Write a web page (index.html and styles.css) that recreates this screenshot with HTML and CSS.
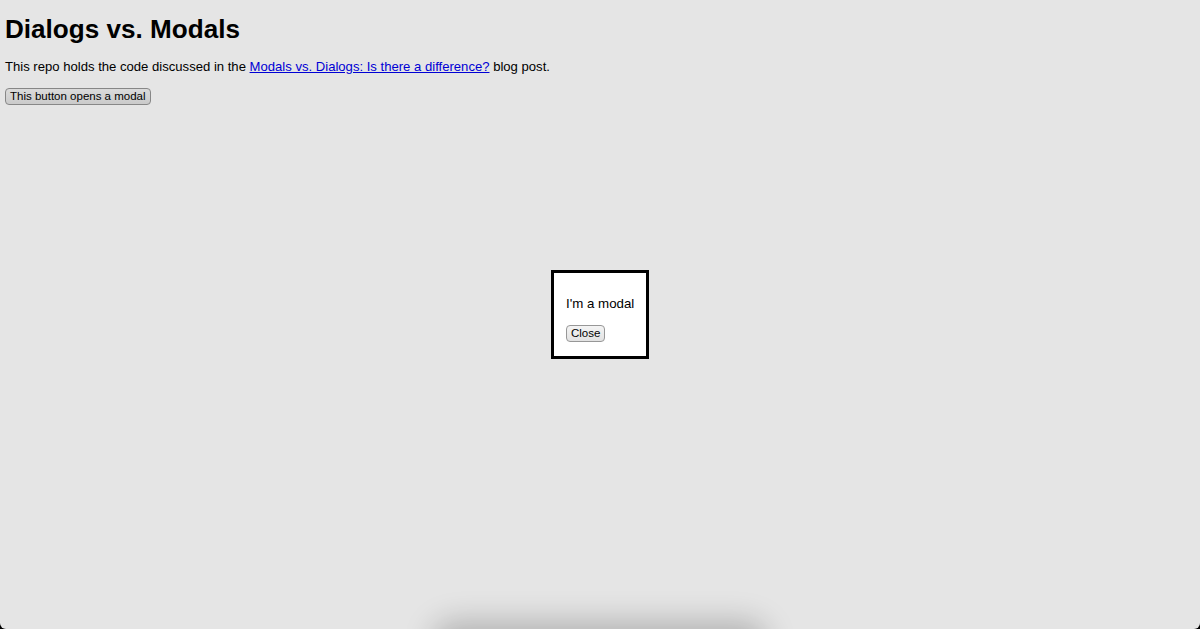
FILE: index.html
```html
<!DOCTYPE html>
<html lang="en">
<head>
<meta charset="utf-8">
<title>Dialogs vs. Modals</title>
<link rel="stylesheet" href="styles.css">
</head>
<body>
<div class="window">
  <main class="page">
    <h1 class="title">Dialogs vs. Modals</h1>
    <p class="intro">This repo holds the code discussed in the <a href="#" class="link">Modals vs. Dialogs: Is there a difference?</a> blog post.</p>
    <button class="btn">This button opens a modal</button>
  </main>
  <div class="backdrop">
    <div class="modal">
      <p class="modal-text">I'm a modal</p>
      <button class="btn">Close</button>
    </div>
  </div>
  <div class="dock-shadow"></div>
</div>
</body>
</html>
```
FILE: styles.css
```css
html, body {
  margin: 0;
  padding: 0;
  height: 100%;
  background: #000;
  overflow: hidden;
}
.window {
  position: relative;
  height: 629px;
  background: #fff;
  border-radius: 0 0 6px 6px;
  overflow: hidden;
  font-family: "Liberation Sans", Arial, sans-serif;
  color: #000;
}
.page {
  padding: 1px 5px;
}
.title {
  font-size: 26.1px;
  font-weight: bold;
  margin: 13px 0 15px;
  line-height: 1.15;
}
.intro {
  font-size: 13.1px;
  margin: 13px 0 14px;
  line-height: 15px;
}
.link {
  color: #0000ee;
  text-decoration: underline;
}
.btn {
  display: block;
  box-sizing: border-box;
  height: 17px;
  font-family: "Liberation Sans", Arial, sans-serif;
  font-size: 11.5px;
  line-height: 13px;
  padding: 1px 4px;
  color: #000;
  background: linear-gradient(#f4f4f4, #e2e2e2);
  border: 1px solid #979797;
  border-radius: 4px;
  margin: 0;
}
.backdrop {
  position: absolute;
  inset: 0;
  background: rgba(0, 0, 0, 0.1);
  display: flex;
  align-items: center;
  justify-content: center;
}
.modal {
  background: #fff;
  border: 3px solid #000;
  padding: 12px 12px 14px 12px;
  width: 68px;
}
.modal-text {
  font-size: 13.3px;
  margin: 11px 0 14px;
  line-height: 15px;
  white-space: nowrap;
}
.dock-shadow {
  position: absolute;
  left: 440px;
  width: 320px;
  bottom: -30px;
  height: 30px;
  border-radius: 20px;
  box-shadow: 0 0 30px 8px rgba(0, 0, 0, 0.22);
}
```
